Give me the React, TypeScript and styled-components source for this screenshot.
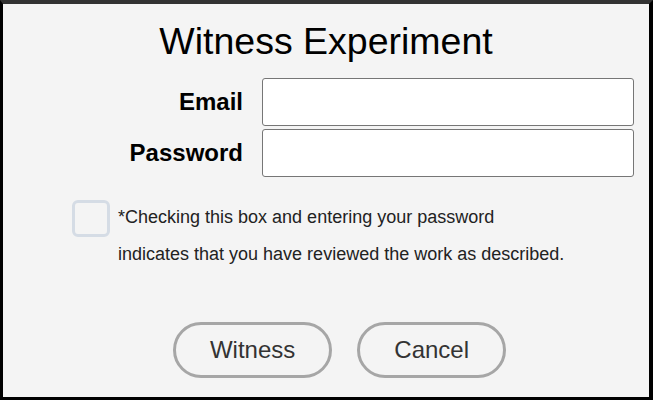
import React from "react";
import styled, { createGlobalStyle } from "styled-components";

const GlobalStyle = createGlobalStyle`
  html, body {
    margin: 0;
    padding: 0;
    background: #000;
  }
  body {
    font-family: "Liberation Sans", Arial, sans-serif;
  }
  * { box-sizing: border-box; }
`;

const Frame = styled.div`
  width: 653px;
  height: 400px;
  background: #f4f4f4;
  border-top: 4px solid #323232;
  border-left: 3px solid #000;
  border-right: 4px solid #000;
  border-bottom: 3px solid #000;
  display: flex;
  flex-direction: column;
  padding-top: 16px;
`;

const Title = styled.h1`
  margin: 0;
  font-size: 37.5px;
  font-weight: 400;
  color: #000;
  text-align: center;
  line-height: 42px;
`;

const Form = styled.div`
  display: grid;
  grid-template-columns: 1fr 372px;
  column-gap: 19px;
  row-gap: 3px;
  padding-right: 15px;
  margin-top: 16px;
  align-items: center;
`;

const Label = styled.label`
  font-size: 24px;
  font-weight: 700;
  color: #000;
  text-align: right;
`;

const Input = styled.input`
  height: 48px;
  width: 100%;
  background: #fff;
  border: 1px solid #767676;
  border-radius: 3px;
  padding: 0 8px;
  font-size: 18px;
  font-family: inherit;
  outline: none;
`;

const ConsentRow = styled.div`
  display: flex;
  align-items: flex-start;
  gap: 8px;
  padding-left: 69px;
  margin-top: 22px;
`;

const Check = styled.input`
  appearance: none;
  -webkit-appearance: none;
  margin: 1px 0 0 0;
  width: 38px;
  height: 37px;
  flex: none;
  border: 3px solid #d5dce5;
  border-radius: 6px;
  background: transparent;
`;

const Consent = styled.p`
  margin: 0;
  font-size: 18px;
  line-height: 37px;
  color: #222;
`;

const Actions = styled.div`
  display: flex;
  justify-content: center;
  gap: 25px;
  padding-left: 27px;
  margin-top: 49px;
`;

const PillButton = styled.button`
  height: 56px;
  padding: 0 34px;
  border: 3px solid #a6a6a6;
  border-radius: 28px;
  background: transparent;
  color: #333;
  font-family: inherit;
  font-size: 24px;
  cursor: pointer;
`;

export default function App() {
  return (
    <>
      <GlobalStyle />
      <Frame>
        <Title>Witness Experiment</Title>
        <Form>
          <Label htmlFor="email">Email</Label>
          <Input id="email" type="email" />
          <Label htmlFor="password">Password</Label>
          <Input id="password" type="password" />
        </Form>
        <ConsentRow>
          <Check type="checkbox" aria-label="confirm review" />
          <Consent>
            *Checking this box and entering your password
            <br />
            indicates that you have reviewed the work as described.
          </Consent>
        </ConsentRow>
        <Actions>
          <PillButton>Witness</PillButton>
          <PillButton>Cancel</PillButton>
        </Actions>
      </Frame>
    </>
  );
}
